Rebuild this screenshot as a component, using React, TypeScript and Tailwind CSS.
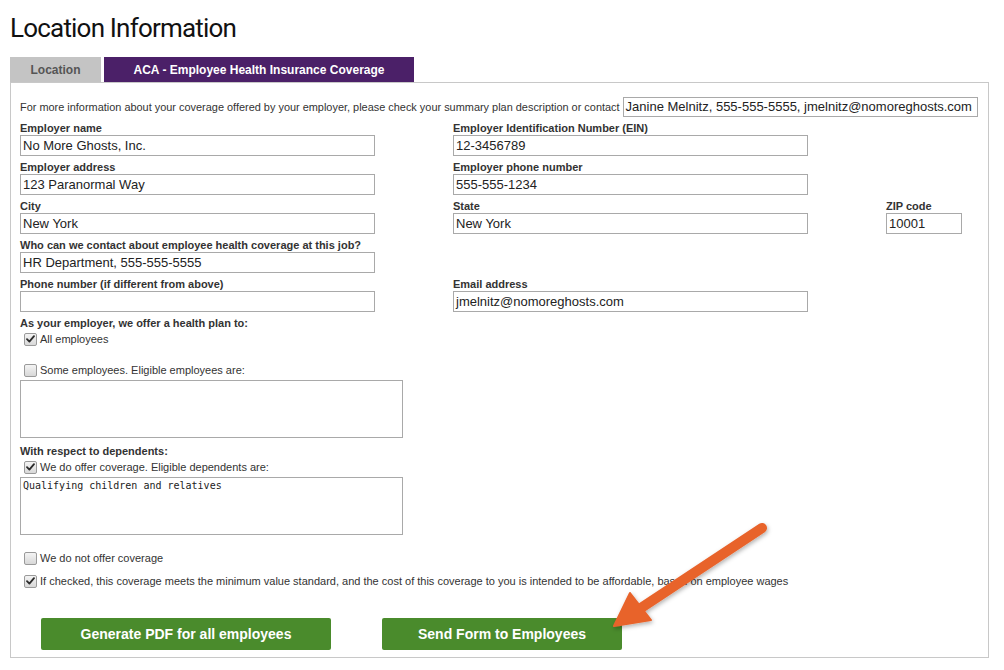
import React from "react";

const Check = ({ checked }: { checked?: boolean }) => (
  <span className="inline-flex w-[13px] h-[13px] rounded-[2px] border border-[#9a9a9a] bg-gradient-to-b from-[#f4f4f4] to-[#d8d8d8] items-center justify-center shrink-0">
    {checked && (
      <svg width="9" height="8" viewBox="0 0 9 8">
        <path d="M1 4.2 L3.4 6.6 L8 1.2" fill="none" stroke="#2b2b2b" strokeWidth="1.8" strokeLinecap="round" strokeLinejoin="round" />
      </svg>
    )}
  </span>
);

const CheckRow = ({ checked, label, className }: { checked?: boolean; label: string; className?: string }) => (
  <div className={"flex items-center h-[16px] pl-[4px] " + (className || "")}>
    <Check checked={checked} />
    <span className="ml-[3px] text-[11px] text-[#333] whitespace-nowrap">{label}</span>
  </div>
);

const Field = ({ label, value, w = "w-[355px]" }: { label: string; value: string; w?: string }) => (
  <div className="mb-[5px]">
    <div className="h-[13px] leading-[13px] text-[11px] font-bold text-[#333] whitespace-nowrap">{label}</div>
    <div className={w + " h-[21px] border border-[#a9a9a9] pl-[2px] text-[13px] leading-[19px] text-[#222] whitespace-nowrap overflow-hidden"}>{value}</div>
  </div>
);

export default function App() {
  return (
    <div className="relative w-[1004px] h-[670px] bg-white overflow-hidden" style={{ fontFamily: '"Liberation Sans", Arial, sans-serif' }}>
      <div className="pl-[10px]">
        <div className="h-[57px] pt-[11px]">
          <h1 className="text-[26px] leading-[34px] text-[#111] tracking-[-0.8px]" style={{ fontFamily: 'Roboto, sans-serif' }}>
            Location Information
          </h1>
        </div>
        <div className="flex h-[25px]">
          <div className="w-[91px] h-[25px] bg-[#c4c4c4] text-[#555] text-[12px] font-bold flex items-center justify-center">Location</div>
          <div className="ml-[3px] w-[310px] h-[25px] bg-[#4b2068] text-white text-[12px] font-bold flex items-center justify-center">
            ACA - Employee Health Insurance Coverage
          </div>
        </div>
        <div className="w-[979px] h-[576px] border border-[#c8c8c8] pt-[14px] pl-[9px]">
          <div className="flex items-center h-[20px]">
            <span className="text-[10.93px] text-[#333] whitespace-nowrap">
              For more information about your coverage offered by your employer, please check your summary plan description or contact
            </span>
            <div className="ml-[3px] w-[355px] h-[20px] border border-[#a9a9a9] pl-[2px] text-[13px] leading-[18px] text-[#222] whitespace-nowrap overflow-hidden">
              Janine Melnitz, 555-555-5555, jmelnitz@nomoreghosts.com
            </div>
          </div>

          <div className="grid grid-cols-[433px_433px_80px] mt-[5px]">
            <Field label="Employer name" value="No More Ghosts, Inc." />
            <Field label="Employer Identification Number (EIN)" value="12-3456789" />
            <div />
            <Field label="Employer address" value="123 Paranormal Way" />
            <Field label="Employer phone number" value="555-555-1234" />
            <div />
            <Field label="City" value="New York" />
            <Field label="State" value="New York" />
            <Field label="ZIP code" value="10001" w="w-[76px]" />
            <Field label="Who can we contact about employee health coverage at this job?" value="HR Department, 555-555-5555" />
            <div />
            <div />
            <Field label="Phone number (if different from above)" value="" />
            <Field label="Email address" value="jmelnitz@nomoreghosts.com" />
            <div />
          </div>

          <div className="h-[13px] leading-[13px] text-[11px] font-bold text-[#333]">As your employer, we offer a health plan to:</div>
          <CheckRow checked label="All employees" className="mt-[1px]" />
          <CheckRow label="Some employees. Eligible employees are:" className="mt-[15px]" />
          <div className="mt-[2px] w-[383px] h-[58px] border border-[#a9a9a9]" />

          <div className="mt-[7px] h-[13px] leading-[13px] text-[11px] font-bold text-[#333]">With respect to dependents:</div>
          <CheckRow checked label="We do offer coverage. Eligible dependents are:" className="mt-[1px]" />
          <div className="mt-[2px] w-[383px] h-[58px] border border-[#a9a9a9] pl-[2px] pt-[2px] text-[10px] leading-[12px] text-[#222]" style={{ fontFamily: '"DejaVu Sans Mono", "Liberation Mono", monospace' }}>
            Qualifying children and relatives
          </div>

          <CheckRow label="We do not offer coverage" className="mt-[15px]" />
          <CheckRow
            checked
            label="If checked, this coverage meets the minimum value standard, and the cost of this coverage to you is intended to be affordable, based on employee wages"
            className="mt-[7px]"
          />

          <div className="flex mt-[29px]">
            <div className="ml-[21px] w-[290px] h-[32px] rounded-[2px] bg-[#4a8b2c] text-white text-[14px] font-bold flex items-center justify-center">
              Generate PDF for all employees
            </div>
            <div className="ml-[51px] w-[240px] h-[32px] rounded-[2px] bg-[#4a8b2c] text-white text-[14px] font-bold flex items-center justify-center">
              Send Form to Employees
            </div>
          </div>
        </div>
      </div>

      <svg className="absolute left-0 top-0 pointer-events-none" width="1004" height="670" viewBox="0 0 1004 670">
        <defs>
          <filter id="sh" x="-20%" y="-20%" width="140%" height="140%">
            <feDropShadow dx="1" dy="2" stdDeviation="2" floodColor="#000" floodOpacity="0.3" />
          </filter>
        </defs>
        <g filter="url(#sh)" fill="#e8632b" stroke="#e8632b">
          <line x1="762" y1="528" x2="641" y2="608" strokeWidth="10" strokeLinecap="round" />
          <polygon points="614,626 630,593 651,620" strokeWidth="2" strokeLinejoin="round" />
        </g>
      </svg>
    </div>
  );
}
